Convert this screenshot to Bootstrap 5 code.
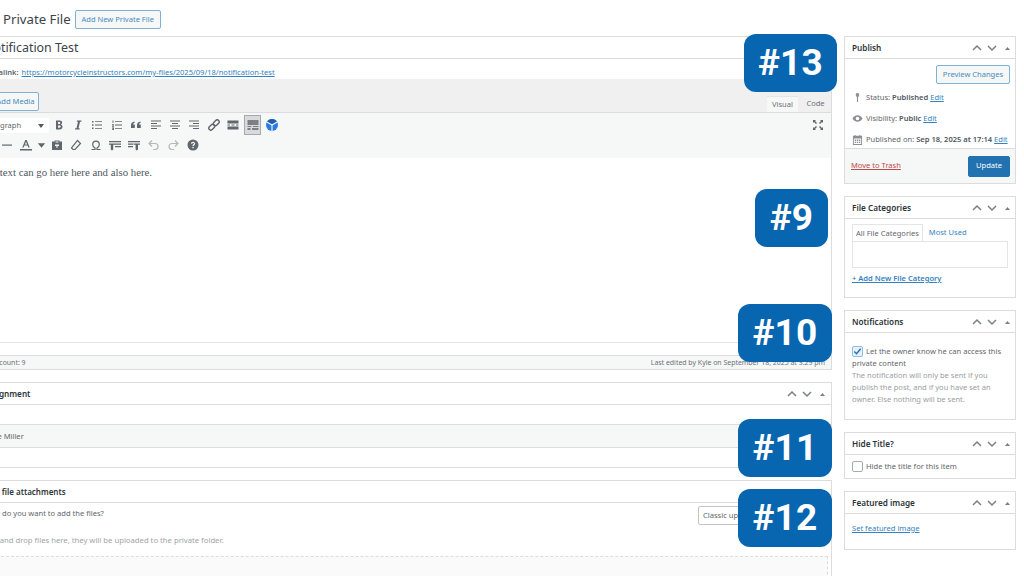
<!DOCTYPE html>
<html lang="en">
<head>
<meta charset="utf-8">
<title>Edit Private File</title>
<link href="https://cdn.jsdelivr.net/npm/bootstrap@5.3.0/dist/css/bootstrap.min.css" rel="stylesheet">
<script src="https://cdn.jsdelivr.net/npm/bootstrap@5.3.0/dist/js/bootstrap.bundle.min.js"></script>
<style>
html,body{height:576px;overflow:hidden;background:#fff}
body{font-family:"Noto Sans","Open Sans",sans-serif;font-size:7.55px;color:#5f666c;line-height:1.3;position:relative}
a{color:#3582c0}
.pg-head{height:36px;margin-left:-24px;padding-top:10px;gap:4px}
.pg-title{font-size:13.2px;line-height:18px;margin:0;color:#3c434a;font-weight:400}
.wbtn{font-size:7.55px;line-height:1;padding:0;border-radius:2px;border:1px solid #7fb0d6;color:#4a8bbf;background:#f6f7f7;display:inline-flex;align-items:center;justify-content:center;--bs-btn-hover-color:#2271b1}
.wbtn-add{height:19px;width:86px}
.wmain{width:862px;margin-left:-30px;margin-right:12px;flex:none}
.wside{width:172px;flex:none}
.title-in{height:23px;border:1px solid #dcdcde;background:#fff;font-size:12.4px;line-height:21px;padding-left:13px;color:#3c434a}
.perma{height:20px;padding-left:9px;font-size:7.55px;line-height:26px;white-space:nowrap}
.perma a{margin-left:1px}
.ed-wrap{border-right:1px solid #dcdcde}
.ed-tools{height:33px;background:#f0f0f1;padding-left:22px}
.wbtn-media{height:19px;width:47px;margin-top:13px}
.ed-tab{width:31px;height:16px;margin-top:17px;font-size:7.55px;text-align:center;line-height:15px;color:#6d7378}
.ed-tab.on{background:#f6f7f7;border-top:1px solid #e4e5e7}
.ed-tabs{gap:2px}
.ed-bar{height:46px;background:#f6f7f7;border-top:1px solid #dcdcde;position:relative;padding-top:2px}
.tb-row{height:20px;align-items:center}
.tb-sel{width:70px;height:15px;margin-left:9px;background:#fff;font-size:7.55px;line-height:15px;padding-left:5px;position:relative;white-space:nowrap;overflow:hidden}
.tb-sel::after{content:"";position:absolute;right:5px;top:6px;border:3px solid transparent;border-top:4px solid #50575e}
.tb-i{width:19.4px;height:18px;display:flex;align-items:center;justify-content:center;flex:none;color:#5f666c}
.tb-i svg{width:12px;height:12px;display:block}
.tb-i.act{box-shadow:inset 0 0 0 1px #a7aaad;background:#d9dadc;height:20px;width:17px;margin:0 1.2px}
.tb-i.dim{color:#b4b8bc}
.tb-lead{margin-left:8px}
.tb-sm{width:11px}
.tb-fs{position:absolute;right:3px;top:3px}
.ed-body{height:185px;padding:7px 0 0 2.5px;font-family:"Liberation Serif",serif;font-size:10.8px;line-height:14px;color:#50575e;border-bottom:1px solid #e4e5e7;white-space:nowrap}
.ed-gap{height:12px}
.ed-stat{height:15px;background:#f6f7f7;border:solid #dcdcde;border-width:1px 0;padding:0 6px 0 10px;font-size:6.95px;line-height:13px;color:#6d7378;white-space:nowrap}
.pbox{border:1px solid #dcdcde;border-radius:0;background:#fff;--bs-card-bg:#fff}
.pbox-h{height:22px;padding:0 5px 0 7px;background:#fff;border-bottom:1px solid #dcdcde;border-radius:0!important;font-size:8.2px;font-weight:600;color:#2c3338;line-height:21px}
.pbox-ic{gap:5px;color:#7a8086}
.pbox-ic svg{width:10px;height:10px;display:block}
.pbox-ic .tip{width:5px;margin-left:3px}
.sb-assign{height:86px;margin-top:12px}
.pbox-h.h-asg{padding-left:12px;padding-right:6px}
.as-row{height:24px;margin-top:19px;background:#f6f7f7;border:solid #dcdcde;border-width:1px 0;line-height:22px;padding-left:16px}
.sb-attach{height:110px;margin-top:12px;border-bottom:0}
.pbox-h.h-att{padding-left:1px;font-size:8px}
.at-row{height:24px;padding:3px 4px 0 6px}
.at-txt-top{margin-top:3px}
.at-sel{width:94px;height:19px;margin-right:35px;border:1px solid #c3c4c7;background:#fff;line-height:17px;padding-left:4px;overflow:hidden;white-space:nowrap;border-radius:2px}
.at-txt{padding-left:9px;font-size:7.7px;color:#a0a4a8;margin-top:10px;white-space:nowrap}
.at-drop{height:40px;margin:11px 3px 0 0;background:#fafafa;border:1px dashed #dcdcde;border-bottom:0}
.side-box{margin-bottom:12px}
.pub-body{padding:6px 5px 0 7px;height:89px}
.pub-line{height:21px;gap:3px;white-space:nowrap;align-items:center}
.pub-line svg{width:11px;height:11px;flex:none;color:#8c8f94}
.pub-line b{font-weight:600;color:#50575e}
.wbtn-prev{width:74px;height:19px;margin-bottom:3px}
.pub-foot{height:35px;background:#f6f7f7;border-top:1px solid #dcdcde;padding:0 5px 0 6px}
.wbtn-up{width:42px;height:21px;background:#2271b1;border-color:#2271b1;color:#fff;--bs-btn-hover-bg:#2271b1;--bs-btn-hover-color:#fff}
a.trash{color:#c0494a}
.cat-body{padding:5px 7px 0 7px;height:78px}
.cat-tab{border:1px solid #e4e5e7;border-bottom:0;padding:0 3px;height:17px;line-height:16px;background:#fff}
.cat-2{line-height:16px;padding-left:6px}
.cat-list{height:27px;border:1px solid #e4e5e7}
.cat-add{display:block;margin-top:6px;font-weight:600}
.chk{width:11px;height:11px;flex:none;border:1px solid #a7aaad;border-radius:2px;background:#fff;margin:0;display:flex;align-items:center;justify-content:center}
.chk.on{background:#e8f1f8;border-color:#8dbde8;margin-right:3px}
.chk svg{width:9px;height:9px}
.note-body{padding:12px 7px 0 7px;height:86px;line-height:12px}
.note-muted{color:#9a9ea3}
.hide-body{padding:0 7px;height:23px;gap:3px}
.feat-body{padding:10px 7px;height:35px}
.tag{position:absolute;background:#0866b0;color:#fff;font-family:Roboto,sans-serif;font-weight:700;font-size:37px;line-height:58px;height:58px;text-align:center;border-radius:12px;letter-spacing:.2px}
.t13{left:744px;top:34px;width:93px}
.t9{left:755px;top:189px;width:73px}
.t10{left:738px;top:304px;width:94px}
.t11{left:738px;top:419px;width:94px}
.t12{left:738px;top:489px;width:94px}
</style>
</head>
<body>
<svg width="0" height="0" class="d-none">
<defs>
<symbol id="up" viewBox="0 0 10 10"><path d="M1 7l4-4 4 4" fill="none" stroke="currentColor" stroke-width="1.5"/></symbol>
<symbol id="dn" viewBox="0 0 10 10"><path d="M1 3l4 4 4-4" fill="none" stroke="currentColor" stroke-width="1.5"/></symbol>
<symbol id="tip" viewBox="0 0 5 10"><path d="M0 7l2.5-3L5 7z" fill="currentColor"/></symbol>
</defs>
</svg>

<div class="pg-head d-flex align-items-start">
  <h1 class="pg-title">Edit Private File</h1>
  <a class="btn wbtn wbtn-add" href="#">Add New Private File</a>
</div>

<div class="d-flex">
  <div class="wmain">
    <div class="title-in">Notification Test</div>
    <div class="perma"><b class="fw-semibold">Permalink:</b> <a href="#">https://motorcycleinstructors.com/my-files/2025/09/18/notification-test</a></div>
    <div class="ed-wrap">
      <div class="ed-tools d-flex justify-content-between">
        <a class="btn wbtn wbtn-media" href="#">Add Media</a>
        <div class="d-flex ed-tabs">
          <div class="ed-tab on">Visual</div>
          <div class="ed-tab">Code</div>
        </div>
      </div>
      <div class="ed-bar">
        <div class="d-flex tb-row">
          <div class="tb-sel">Paragraph</div>
          <span class="tb-i"><svg viewBox="0 0 12 12"><path d="M3 1.500h3.600c1.600 0 2.500.8 2.500 2.100 0 1-.5 1.600-1.300 1.900 1 .2 1.700 1 1.700 2.200 0 1.600-1.100 2.800-3 2.800H3zm2 1.600v2h1.300c.7 0 1-.4 1-1s-.3-1-1-1zm0 3.400v2.300h1.500c.8 0 1.200-.5 1.200-1.200s-.4-1.100-1.200-1.100z" fill="currentColor"/></svg></span>
          <span class="tb-i"><svg viewBox="0 0 12 12"><path d="M5 1.500h4.500l-.2 1.200H8L6.500 9.300h1.200l-.2 1.200H3l.2-1.200h1.300L6 2.700H4.800z" fill="currentColor"/></svg></span>
          <span class="tb-i"><svg viewBox="0 0 12 12"><path d="M1 2h1.500v1.500H1zM1 5.300h1.500v1.500H1zM1 8.600h1.500v1.500H1zM4 2.300h7v.8H4zM4 5.600h7v.8H4zM4 8.900h7v.8H4z" fill="currentColor"/></svg></span>
          <span class="tb-i"><svg viewBox="0 0 12 12"><path d="M1.500 1.500h1v2.300h-1zM1 5.300h2v.8l-1 1h1v.7H1v-.8l1-1H1zM1 8.500h2v2.500H1v-.7h1.200v-.3H1.300v-.6h.9v-.2H1zM4 2.300h7v.8H4zM4 5.600h7v.8H4zM4 8.900h7v.8H4z" fill="currentColor"/></svg></span>
          <span class="tb-i"><svg viewBox="0 0 12 12"><path d="M1 9V6.200C1 4 2.200 2.800 4.500 2.500v1.400C3.300 4.200 2.800 4.800 2.800 5.600h2V9zM7 9V6.200C7 4 8.200 2.800 10.500 2.500v1.400c-1.200.3-1.700.9-1.700 1.700h2V9z" fill="currentColor"/></svg></span>
          <span class="tb-i"><svg viewBox="0 0 12 12"><path d="M1 1.500h10v1H1zM1 4h6v1H1zM1 6.500h10v1H1zM1 9h6v1H1z" fill="currentColor"/></svg></span>
          <span class="tb-i"><svg viewBox="0 0 12 12"><path d="M1 1.500h10v1H1zM3 4h6v1H3zM1 6.500h10v1H1zM3 9h6v1H3z" fill="currentColor"/></svg></span>
          <span class="tb-i"><svg viewBox="0 0 12 12"><path d="M1 1.500h10v1H1zM5 4h6v1H5zM1 6.500h10v1H1zM5 9h6v1H5z" fill="currentColor"/></svg></span>
          <span class="tb-i"><svg viewBox="0 0 12 12"><g fill="none" stroke="currentColor" stroke-width="1.400" transform="rotate(-45 6 6)"><rect x="-.5" y="4" width="6.500" height="4" rx="2"/><rect x="6" y="4" width="6.500" height="4" rx="2"/></g></svg></span>
          <span class="tb-i"><svg viewBox="0 0 12 12"><path d="M.5 1.500h11v3H.5zM.5 7.500h11v3H.5zM.5 5.500h2.500v1H.5zM4.500 5.500h3v1h-3zM9 5.500h2.500v1H9z" fill="currentColor"/></svg></span>
          <span class="tb-i act"><svg viewBox="0 0 12 12"><path d="M.5 1h11v5H.5zM.5 7h4v1h-4zM6 7h5.500v1H6zM.5 9h3v2h-3zM5 9h6.500v2H5z" fill="#7a8086"/></svg></span>
          <span class="tb-i"><svg viewBox="0 0 12 12"><circle cx="6" cy="6" r="6" fill="#2c7be0"/><path d="M6 0a6 6 0 0 1 5.200 3L6 6 .8 3A6 6 0 0 1 6 0z" fill="#1f5fb8"/><path d="M6 6V12M6 6L.8 3M6 6l5.200-3" stroke="#fff" stroke-width="1.100" fill="none"/></svg></span>
        </div>
        <div class="d-flex tb-row">
          <span class="tb-i tb-lead"></span>
          <span class="tb-i"><svg viewBox="0 0 12 12"><path d="M1 5.500h10v1.200H1z" fill="currentColor"/></svg></span>
          <span class="tb-i"><svg viewBox="0 0 12 12"><path d="M5.300 1h1.400L9.700 8.500H8.300L7.600 6.600H4.400L3.700 8.500H2.300zM6 2.800L4.900 5.500h2.200zM0 10h12v1.500H0z" fill="currentColor"/></svg></span>
          <span class="tb-i tb-sm"><svg viewBox="0 0 12 12"><path d="M2 4h8L6 9z" fill="currentColor"/></svg></span>
          <span class="tb-i"><svg viewBox="0 0 12 12"><path fill-rule="evenodd" d="M1 2.500h2.500v-1h5v1H11V11H1zM4.500 2.500v1h3v-1zM4 5.500V7h1.500v2h1V7H8V5.500z" fill="currentColor"/></svg></span>
          <span class="tb-i"><svg viewBox="0 0 12 12"><path d="M7.500 1.500l3 3-5.500 6H3L1.500 9z" fill="none" stroke="currentColor" stroke-width="1.200"/></svg></span>
          <span class="tb-i"><svg viewBox="0 0 12 12"><path d="M1.500 10.500H5V9C3.500 8.300 2.700 7 2.700 5.500c0-2 1.400-3.300 3.300-3.300s3.300 1.300 3.300 3.300c0 1.500-.8 2.800-2.300 3.500v1.500h3.500" fill="none" stroke="currentColor" stroke-width="1.200"/></svg></span>
          <span class="tb-i"><svg viewBox="0 0 12 12"><path d="M0 2h12v1.300H0zM6 4.500h6v1.300H6zM6 7h6v1.300H6zM0 4.500h6v1.300H4.200v4.700L3 11.500 1.800 10.500V5.800H0z" fill="currentColor"/></svg></span>
          <span class="tb-i"><svg viewBox="0 0 12 12"><path d="M0 2h12v1.300H0zM0 4.500h5v1.300H0zM0 7h5v1.300H0zM5.500 4.500H12v1.300h-2v4.700l-1.200 1-1.200-1V5.800h-2.100z" fill="currentColor"/></svg></span>
          <span class="tb-i dim"><svg viewBox="0 0 12 12"><path d="M4 1.500L1 4.500l3 3M1.500 4.500h5.500a3 3 0 0 1 0 6H5" fill="none" stroke="currentColor" stroke-width="1.200"/></svg></span>
          <span class="tb-i dim"><svg viewBox="0 0 12 12"><path d="M8 1.500l3 3-3 3M10.500 4.500H5a3 3 0 0 0 0 6h2" fill="none" stroke="currentColor" stroke-width="1.200"/></svg></span>
          <span class="tb-i"><svg viewBox="0 0 12 12"><path fill-rule="evenodd" d="M6 .5a5.500 5.500 0 1 1 0 11 5.500 5.500 0 0 1 0-11zM4 4.700h1.300c0-.5.300-.9.800-.9s.8.300.8.700c0 .8-1.400 1-1.400 2.500h1.200c0-1 1.500-1.200 1.500-2.600C7.700 3.300 7 2.700 6 2.700c-1.200 0-2 .8-2 2zM5.400 7.800v1.400h1.300V7.800z" fill="currentColor"/></svg></span>
        </div>
        <span class="tb-i tb-fs"><svg viewBox="0 0 12 12"><path d="M1 1h3L3 2l2 2-1 1-2-2-1 1zM11 1v3l-1-1-2 2-1-1 2-2-1-1zM1 11V8l1 1 2-2 1 1-2 2 1 1zM11 11H8l1-1-2-2 1-1 2 2 1-1z" fill="currentColor"/></svg></span>
      </div>
      <div class="ed-body">Some text can go here here and also here.</div>
      <div class="ed-gap"></div>
      <div class="ed-stat d-flex justify-content-between"><span>Word count: 9</span><span>Last edited by Kyle on September 18, 2025 at 3:29 pm</span></div>
    </div>

    <div class="card pbox sb-assign">
      <div class="card-header pbox-h h-asg d-flex justify-content-between align-items-center"><span>Assignment</span>
        <span class="d-flex pbox-ic"><svg><use href="#up"/></svg><svg><use href="#dn"/></svg><svg class="tip"><use href="#tip"/></svg></span></div>
      <div class="as-row">Kyle Miller</div>
    </div>

    <div class="card pbox sb-attach">
      <div class="card-header pbox-h h-att d-flex justify-content-between align-items-center"><span>Private file attachments</span></div>
      <div class="at-row d-flex justify-content-between"><span class="at-txt-top">Where do you want to add the files?</span><span class="at-sel">Classic uploader</span></div>
      <div class="at-txt">Drag and drop files here, they will be uploaded to the private folder.</div>
      <div class="at-drop"></div>
    </div>
  </div>

  <div class="wside">
    <div class="card pbox side-box">
      <div class="card-header pbox-h d-flex justify-content-between align-items-center"><span>Publish</span>
        <span class="d-flex pbox-ic"><svg><use href="#up"/></svg><svg><use href="#dn"/></svg><svg class="tip"><use href="#tip"/></svg></span></div>
      <div class="pub-body">
        <div class="text-end"><a class="btn wbtn wbtn-prev" href="#">Preview Changes</a></div>
        <div class="pub-line d-flex"><svg viewBox="0 0 12 12"><path d="M6 1a2 2 0 0 1 1.300 3.500L6.600 6v5h-1.200V6l-.7-1.500A2 2 0 0 1 6 1z" fill="currentColor"/></svg><span>Status: <b>Published</b> <a href="#">Edit</a></span></div>
        <div class="pub-line d-flex"><svg viewBox="0 0 12 12"><path fill-rule="evenodd" d="M6 2.500c2.500 0 4.500 1.700 5.500 3.500-1 1.800-3 3.500-5.500 3.500S1.500 7.800.5 6c1-1.800 3-3.500 5.500-3.500zM6 4a2 2 0 1 0 0 4 2 2 0 0 0 0-4z" fill="currentColor"/></svg><span>Visibility: <b>Public</b> <a href="#">Edit</a></span></div>
        <div class="pub-line d-flex"><svg viewBox="0 0 12 12"><path fill-rule="evenodd" d="M1 2h2V1h1v1h4V1h1v1h2v10H1zM2 5v6h8V5zM3 6h1.500v1.500H3zM5.300 6h1.500v1.500H5.300zM7.600 6h1.500v1.500H7.600zM3 8.400h1.500v1.500H3zM5.300 8.400h1.500v1.500H5.300zM7.600 8.400h1.500v1.500H7.600z" fill="currentColor"/></svg><span>Published on: <b>Sep 18, 2025 at 17:14</b> <a href="#">Edit</a></span></div>
      </div>
      <div class="pub-foot d-flex justify-content-between align-items-center"><a class="trash" href="#">Move to Trash</a><a class="btn wbtn wbtn-up" href="#">Update</a></div>
    </div>

    <div class="card pbox side-box">
      <div class="card-header pbox-h d-flex justify-content-between align-items-center"><span>File Categories</span>
        <span class="d-flex pbox-ic"><svg><use href="#up"/></svg><svg><use href="#dn"/></svg><svg class="tip"><use href="#tip"/></svg></span></div>
      <div class="cat-body">
        <div class="d-flex"><span class="cat-tab">All File Categories</span><a class="cat-2 text-decoration-none" href="#">Most Used</a></div>
        <div class="cat-list"></div>
        <a class="cat-add" href="#">+ Add New File Category</a>
      </div>
    </div>

    <div class="card pbox side-box">
      <div class="card-header pbox-h d-flex justify-content-between align-items-center"><span>Notifications</span>
        <span class="d-flex pbox-ic"><svg><use href="#up"/></svg><svg><use href="#dn"/></svg><svg class="tip"><use href="#tip"/></svg></span></div>
      <div class="note-body">
        <div><span class="chk on d-inline-flex align-middle"><svg viewBox="0 0 10 10"><path d="M1.500 5l2.500 2.500L8.500 2" fill="none" stroke="#2271b1" stroke-width="1.600"/></svg></span>Let the owner know he can access this private content</div>
        <div class="note-muted">The notification will only be sent if you publish the post, and if you have set an owner. Else nothing will be sent.</div>
      </div>
    </div>

    <div class="card pbox side-box">
      <div class="card-header pbox-h d-flex justify-content-between align-items-center"><span>Hide Title?</span>
        <span class="d-flex pbox-ic"><svg><use href="#up"/></svg><svg><use href="#dn"/></svg><svg class="tip"><use href="#tip"/></svg></span></div>
      <div class="hide-body d-flex align-items-center"><span class="chk"></span><span>Hide the title for this item</span></div>
    </div>

    <div class="card pbox side-box">
      <div class="card-header pbox-h d-flex justify-content-between align-items-center"><span>Featured image</span>
        <span class="d-flex pbox-ic"><svg><use href="#up"/></svg><svg><use href="#dn"/></svg><svg class="tip"><use href="#tip"/></svg></span></div>
      <div class="feat-body"><a href="#">Set featured image</a></div>
    </div>
  </div>
</div>

<div class="tag t13">#13</div>
<div class="tag t9">#9</div>
<div class="tag t10">#10</div>
<div class="tag t11">#11</div>
<div class="tag t12">#12</div>
</body>
</html>
